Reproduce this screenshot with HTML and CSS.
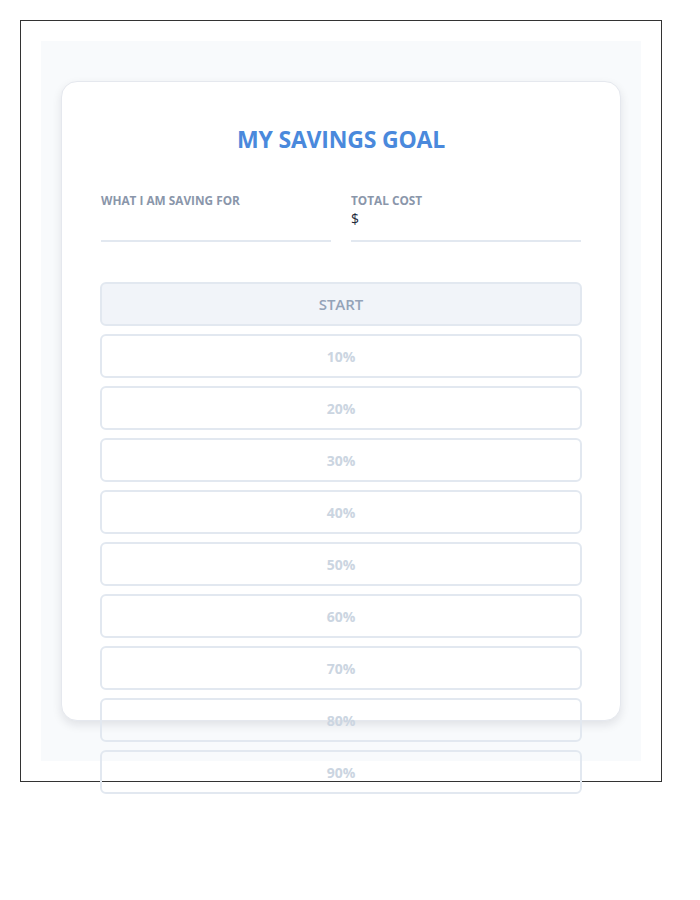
FILE: index.html
```html
<!DOCTYPE html>
<html>
<head>
<meta charset="utf-8">
<link rel="stylesheet" href="styles.css">
</head>
<body>
<div class="frame">
  <div class="stage">
    <div class="card">
      <h1 class="title">MY SAVINGS GOAL</h1>
      <div class="fields">
        <div class="field">
          <div class="label">WHAT I AM SAVING FOR</div>
          <div class="input"></div>
        </div>
        <div class="field">
          <div class="label">TOTAL COST</div>
          <div class="input"><span class="cur">$</span></div>
        </div>
      </div>
      <div class="steps">
        <div class="step start">START</div>
        <div class="step">10%</div>
        <div class="step">20%</div>
        <div class="step">30%</div>
        <div class="step">40%</div>
        <div class="step">50%</div>
        <div class="step">60%</div>
        <div class="step">70%</div>
        <div class="step">80%</div>
        <div class="step">90%</div>
      </div>
    </div>
  </div>
</div>
</body>
</html>
```

FILE: styles.css
```css
* { box-sizing: border-box; }
html, body { margin: 0; padding: 0; background: #fff; }
body { padding: 20px; font-family: "Open Sans", "Noto Sans", sans-serif; }
.frame {
  width: 642px;
  border: 1px solid #333;
  padding: 20px;
}
.stage {
  width: 600px;
  height: 720px;
  background: #f8fafc;
  padding: 40px 20px;
}
.card {
  height: 640px;
  background: #fff;
  border: 1px solid #e5e8ee;
  border-radius: 16px;
  box-shadow: 0 4px 10px rgba(15, 23, 42, 0.10);
  padding: 39px;
}
.title {
  margin: 0;
  text-align: center;
  font-size: 23px;
  font-weight: 700;
  line-height: 36px;
  color: #4a89dc;
  letter-spacing: -0.2px;
}
.fields {
  display: flex;
  gap: 20px;
  margin-top: 35px;
}
.field { flex: 1; }
.label {
  font-size: 11.8px;
  font-weight: 700;
  color: #8a96aa;
  line-height: 16px;
}
.input {
  height: 34px;
  padding-top: 1px;
  border-bottom: 2px solid #e2e8f0;
  font-size: 14px;
  color: #1e293b;
  line-height: 20px;
}
.steps {
  margin-top: 40px;
  margin-left: -1px;
  margin-right: -1px;
  display: flex;
  flex-direction: column;
  gap: 8px;
}
.step {
  height: 44px;
  border: 2px solid #e2e8f0;
  border-radius: 6px;
  display: flex;
  align-items: center;
  justify-content: center;
  font-size: 14px;
  font-weight: 700;
  color: #cbd5e1;
  flex-shrink: 0;
}
.step.start {
  background: #f1f4f9;
  color: #94a3b8;
  font-size: 15px;
  font-weight: 600;
}
```
